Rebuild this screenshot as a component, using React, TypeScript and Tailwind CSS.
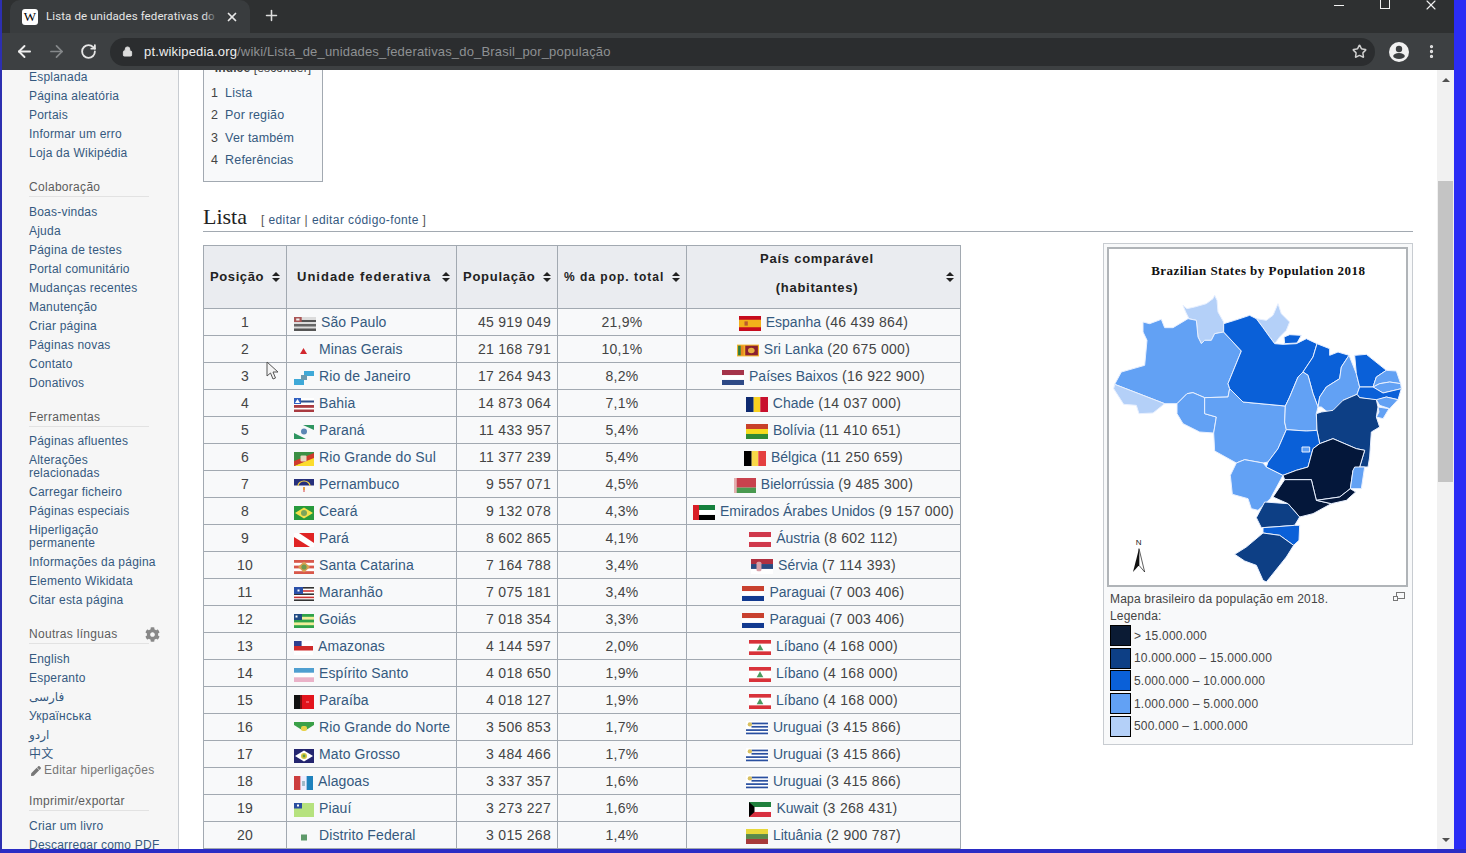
import React from "react";
import { ArrowLeft, ArrowRight, RotateCw, Lock, Star, Plus, X, EllipsisVertical } from "lucide-react";
import { FaCog, FaPen } from "react-icons/fa";

type Row = [number, string, string, string, string, string];

const rows: Row[] = [
  [1, "São Paulo", "45 919 049", "21,9%", "Espanha", "(46 439 864)"],
  [2, "Minas Gerais", "21 168 791", "10,1%", "Sri Lanka", "(20 675 000)"],
  [3, "Rio de Janeiro", "17 264 943", "8,2%", "Países Baixos", "(16 922 900)"],
  [4, "Bahia", "14 873 064", "7,1%", "Chade", "(14 037 000)"],
  [5, "Paraná", "11 433 957", "5,4%", "Bolívia", "(11 410 651)"],
  [6, "Rio Grande do Sul", "11 377 239", "5,4%", "Bélgica", "(11 250 659)"],
  [7, "Pernambuco", "9 557 071", "4,5%", "Bielorrússia", "(9 485 300)"],
  [8, "Ceará", "9 132 078", "4,3%", "Emirados Árabes Unidos", "(9 157 000)"],
  [9, "Pará", "8 602 865", "4,1%", "Áustria", "(8 602 112)"],
  [10, "Santa Catarina", "7 164 788", "3,4%", "Sérvia", "(7 114 393)"],
  [11, "Maranhão", "7 075 181", "3,4%", "Paraguai", "(7 003 406)"],
  [12, "Goiás", "7 018 354", "3,3%", "Paraguai", "(7 003 406)"],
  [13, "Amazonas", "4 144 597", "2,0%", "Líbano", "(4 168 000)"],
  [14, "Espírito Santo", "4 018 650", "1,9%", "Líbano", "(4 168 000)"],
  [15, "Paraíba", "4 018 127", "1,9%", "Líbano", "(4 168 000)"],
  [16, "Rio Grande do Norte", "3 506 853", "1,7%", "Uruguai", "(3 415 866)"],
  [17, "Mato Grosso", "3 484 466", "1,7%", "Uruguai", "(3 415 866)"],
  [18, "Alagoas", "3 337 357", "1,6%", "Uruguai", "(3 415 866)"],
  [19, "Piauí", "3 273 227", "1,6%", "Kuwait", "(3 268 431)"],
  [20, "Distrito Federal", "3 015 268", "1,4%", "Lituânia", "(2 900 787)"],
];

// bandeiras desenhadas numa grelha de 20x14
const flags: Record<string, React.ReactNode> = {
  "São Paulo": (
    <>
      <rect width="20" height="14" fill="#dcdcdc" />
      <rect y="3" width="20" height="2" fill="#555" />
      <rect y="7" width="20" height="2.5" fill="#666" />
      <rect y="11.5" width="20" height="2.5" fill="#555" />
      <rect width="7" height="5" fill="#a55" />
      <rect x="2" y="1.5" width="3" height="2" fill="#eee" />
    </>
  ),
  "Minas Gerais": <polygon points="9.5,4 13,10 6,10" fill="#d2282e" />,
  "Rio de Janeiro": (
    <>
      <rect x="10" width="10" height="5" fill="#3fa9d8" />
      <rect y="8" width="10" height="6" fill="#3fa9d8" />
      <rect x="7" y="4" width="6" height="5" fill="#6b9ab0" />
    </>
  ),
  Bahia: (
    <>
      <rect width="20" height="14" fill="#fff" />
      <rect x="6" y="2.5" width="14" height="2" fill="#2d4f8a" />
      <rect y="7" width="20" height="2.8" fill="#a93a40" />
      <rect y="11.5" width="20" height="2.5" fill="#a93a40" />
      <rect width="7" height="6" fill="#3060c0" />
      <polygon points="3.5,1 6,5 1,5" fill="#fff" />
    </>
  ),
  Paraná: (
    <>
      <polygon points="0,8 0,14 12,14" fill="#2e9560" />
      <polygon points="9,0 20,0 20,5" fill="#2e9560" />
      <circle cx="10" cy="6.5" r="3" fill="#5d87b5" />
    </>
  ),
  "Rio Grande do Sul": (
    <>
      <rect width="20" height="14" fill="#3c8f44" />
      <polygon points="0,14 20,5 20,14" fill="#fbdc2c" />
      <polygon points="0,9 20,1 20,6 0,14" fill="#cf3a2c" />
      <rect x="6.5" y="3.5" width="6" height="6" rx="1" fill="#e8d7c0" />
    </>
  ),
  Pernambuco: (
    <>
      <rect width="20" height="6.5" fill="#26307c" />
      <path d="M4 7a6 5 0 0 1 12 0" fill="none" stroke="#f4d34a" strokeWidth="1.2" />
      <rect x="9" y="8" width="2" height="3" fill="#e8a040" />
      <rect x="9.4" y="11" width="1.2" height="2" fill="#e06060" />
    </>
  ),
  Ceará: (
    <>
      <rect width="20" height="14" fill="#279a3c" />
      <polygon points="10,1.5 19,7 10,12.5 1,7" fill="#f5e04c" />
      <circle cx="10" cy="7" r="3" fill="#7aa55a" />
    </>
  ),
  Pará: (
    <>
      <rect width="20" height="14" fill="#e02424" />
      <polygon points="0,0 5,0 20,10 20,14 16,14 0,4" fill="#fff" />
    </>
  ),
  "Santa Catarina": (
    <>
      <rect width="20" height="14" fill="#fff" />
      <rect width="20" height="2.8" fill="#d8584a" />
      <rect y="5.6" width="20" height="2.8" fill="#d8584a" />
      <rect y="11.2" width="20" height="2.8" fill="#d8584a" />
      <polygon points="10,1.5 16,7 10,12.5 4,7" fill="#d8a050" />
      <circle cx="10" cy="7" r="2.6" fill="#6f9a50" />
    </>
  ),
  Maranhão: (
    <>
      <rect width="20" height="14" fill="#fff" />
      <rect y="0" width="20" height="1.6" fill="#333" />
      <rect y="3.2" width="20" height="1.6" fill="#c33" />
      <rect y="6.4" width="20" height="1.6" fill="#333" />
      <rect y="9.6" width="20" height="1.6" fill="#c33" />
      <rect y="12.4" width="20" height="1.6" fill="#333" />
      <rect width="9" height="7" fill="#2a4fa8" />
      <rect x="3.5" y="2.5" width="2" height="2" fill="#fff" />
    </>
  ),
  Goiás: (
    <>
      <rect width="20" height="14" fill="#2fa34a" />
      <rect y="2.8" width="20" height="2.8" fill="#f1ee9a" />
      <rect y="8.4" width="20" height="2.8" fill="#f1ee9a" />
      <rect width="8" height="6" fill="#1f4a82" />
      <rect x="1.5" y="1.5" width="2" height="2" fill="#fff" />
    </>
  ),
  Amazonas: (
    <>
      <rect width="20" height="14" fill="#fff" />
      <rect y="5" width="20" height="4.5" fill="#cf2a2a" />
      <rect width="8" height="5" fill="#2d3f90" />
    </>
  ),
  "Espírito Santo": (
    <>
      <rect width="20" height="14" fill="#fff" />
      <rect width="20" height="4.7" fill="#4f9fd0" />
      <rect y="9.3" width="20" height="4.7" fill="#eab2c8" />
    </>
  ),
  Paraíba: (
    <>
      <rect width="20" height="14" fill="#e3141c" />
      <rect width="7" height="14" fill="#111" />
      <rect x="6" width="2" height="14" fill="#7a1010" />
      <rect x="12" y="6.5" width="3" height="1" fill="#f9a" />
    </>
  ),
  "Rio Grande do Norte": (
    <>
      <polygon points="0,0 20,0 20,3 12,8 8,8 0,3" fill="#3aa048" />
      <rect x="7" y="4" width="6" height="5" rx="2" fill="#e8d24a" />
    </>
  ),
  "Mato Grosso": (
    <>
      <rect width="20" height="14" fill="#23256f" />
      <polygon points="10,1.5 19,7 10,12.5 1,7" fill="#fff" />
      <circle cx="10" cy="7" r="3" fill="#d8c840" />
      <circle cx="10" cy="7" r="1.4" fill="#5a9a4a" />
    </>
  ),
  Alagoas: (
    <>
      <rect width="20" height="14" fill="#eef" />
      <rect width="6.7" height="14" fill="#cc3d3d" />
      <rect x="13.3" width="6.7" height="14" fill="#1f82bd" />
      <rect x="8.5" y="5" width="3" height="5" fill="#9fb8c8" />
    </>
  ),
  Piauí: (
    <>
      <rect width="20" height="14" fill="#b6e27e" />
      <rect width="8" height="5.5" fill="#2a4fa0" />
      <rect x="3" y="1.5" width="2" height="2" fill="#fff" />
    </>
  ),
  "Distrito Federal": <rect x="7" y="4.5" width="6" height="6" fill="#5e9a6a" />,
  Espanha: (
    <>
      <rect width="20" height="14" fill="#c60b1e" />
      <rect y="3.5" width="20" height="7" fill="#f2b11a" />
      <rect x="5" y="5" width="3" height="4" fill="#ba5b2d" />
    </>
  ),
  "Sri Lanka": (
    <>
      <rect y="1.5" width="20" height="11" fill="#f2b32a" />
      <rect x="1" y="2.5" width="2.5" height="9" fill="#2d7a40" />
      <rect x="3.5" y="2.5" width="2.5" height="9" fill="#e88a20" />
      <rect x="7.5" y="2.5" width="11.5" height="9" fill="#8a1f30" />
      <ellipse cx="13" cy="7" rx="3" ry="2.6" fill="#e8b040" />
    </>
  ),
  "Países Baixos": (
    <>
      <rect width="20" height="14" fill="#fff" />
      <rect width="20" height="4.7" fill="#a5344a" />
      <rect y="9.3" width="20" height="4.7" fill="#2e4a86" />
    </>
  ),
  Chade: (
    <>
      <rect width="7" height="14" fill="#0e2a70" />
      <rect x="7" width="6" height="14" fill="#f8d020" />
      <rect x="13" width="7" height="14" fill="#c8102e" />
    </>
  ),
  Bolívia: (
    <>
      <rect width="20" height="5" fill="#c8402a" />
      <rect y="4.7" width="20" height="4.7" fill="#f6dc1c" />
      <rect y="9.3" width="20" height="4.7" fill="#2f8a34" />
    </>
  ),
  Bélgica: (
    <>
      <rect width="7" height="14" fill="#000" />
      <rect x="7" width="6" height="14" fill="#f8d848" />
      <rect x="13" width="7" height="14" fill="#e44040" />
    </>
  ),
  Bielorrússia: (
    <>
      <rect width="20" height="9" fill="#c8424e" />
      <rect y="9" width="20" height="5" fill="#4a9a50" />
      <rect width="2.5" height="14" fill="#e4b0b0" />
    </>
  ),
  "Emirados Árabes Unidos": (
    <>
      <rect width="20" height="4.7" fill="#15803d" />
      <rect y="4.7" width="20" height="4.6" fill="#fff" />
      <rect y="9.3" width="20" height="4.7" fill="#000" />
      <rect width="5.5" height="14" fill="#d81e26" />
    </>
  ),
  Áustria: (
    <>
      <rect width="20" height="14" fill="#fff" />
      <rect width="20" height="4.7" fill="#d0394c" />
      <rect y="9.3" width="20" height="4.7" fill="#d0394c" />
    </>
  ),
  Sérvia: (
    <>
      <rect width="20" height="4.7" fill="#b03040" />
      <rect y="4.7" width="20" height="4.6" fill="#2a4a80" />
      <rect y="9.3" width="20" height="4.7" fill="#fff" />
      <rect x="5" y="2.5" width="4.5" height="9" rx="1.5" fill="#d8a0a8" />
    </>
  ),
  Paraguai: (
    <>
      <rect width="20" height="14" fill="#fff" />
      <rect width="20" height="4.7" fill="#c8402e" />
      <rect y="9.3" width="20" height="4.7" fill="#123a90" />
    </>
  ),
  Líbano: (
    <>
      <rect width="20" height="14" fill="#fff" />
      <rect width="20" height="3.4" fill="#d8323a" />
      <rect y="10.6" width="20" height="3.4" fill="#d8323a" />
      <polygon points="10,4 13,9.5 7,9.5" fill="#4a9a60" />
    </>
  ),
  Uruguai: (
    <>
      <rect width="20" height="14" fill="#fff" />
      <rect x="5" y="1.5" width="15" height="1.6" fill="#2a50a0" />
      <rect x="5" y="4.6" width="15" height="1.6" fill="#2a50a0" />
      <rect y="7.7" width="20" height="1.6" fill="#2a50a0" />
      <rect y="10.8" width="20" height="1.6" fill="#2a50a0" />
      <circle cx="3.5" cy="3.2" r="2" fill="#d8c060" />
    </>
  ),
  Kuwait: (
    <>
      <rect width="20" height="4.7" fill="#20803d" />
      <rect y="4.7" width="20" height="4.6" fill="#fff" />
      <rect y="9.3" width="20" height="4.7" fill="#d83040" />
      <polygon points="0,0 5,4.7 5,9.3 0,14" fill="#000" />
    </>
  ),
  Lituânia: (
    <>
      <rect width="20" height="4.7" fill="#e8d83a" />
      <rect y="4.7" width="20" height="4.6" fill="#5a8a4a" />
      <rect y="9.3" width="20" height="4.7" fill="#a83a3a" />
    </>
  ),
};

const Flag = ({ name, w, h }: { name: string; w: number; h: number }) => (
  <svg viewBox="0 0 20 14" width={w} height={h} preserveAspectRatio="none" className="shrink-0 mt-[3px]">
    {flags[name]}
  </svg>
);

const SortIcon = () => (
  <svg viewBox="0 0 8 10" className="w-[8px] h-[10px] shrink-0" fill="#222">
    <polygon points="4,0 8,4 0,4" />
    <polygon points="4,10 8,6 0,6" />
  </svg>
);

const Li = ({ children }: { children: React.ReactNode }) => (
  <li className="py-[3px] leading-[13px] text-[12px] tracking-[0.22px] text-[#35597f]">{children}</li>
);

const Heading = ({ title, gear, tight }: { title: string; gear?: boolean; tight?: boolean }) => (
  <div className={`relative h-[15px] flex items-center text-[12px] tracking-[0.3px] text-[#5c5c5c] pb-[2px] ${tight ? "mb-[7px]" : "mb-[8px]"}`}>
    {title}
    {gear && <FaCog size={15} className="absolute left-[116px] top-0 text-[#888]" />}
    <span className="absolute left-0 bottom-[-2px] w-[120px] h-px bg-[#e2e2e2]" />
  </div>
);

const Section = ({ title, items, gear }: { title: string; items: string[]; gear?: boolean }) => (
  <div className="mt-[17px]">
    <Heading title={title} gear={gear} />
    <ul>
      {items.map((i) => (
        <Li key={i}>{i}</Li>
      ))}
    </ul>
  </div>
);

const Sidebar = () => (
  <aside className="w-[177px] shrink-0 bg-[#f6f6f6] border-r border-[#c8ccd1] pl-[27px] overflow-hidden">
    <ul className="-mt-[2px]">
      {["Esplanada", "Página aleatória", "Portais", "Informar um erro", "Loja da Wikipédia"].map((i) => (
        <Li key={i}>{i}</Li>
      ))}
    </ul>
    <Section
      title="Colaboração"
      items={[
        "Boas-vindas",
        "Ajuda",
        "Página de testes",
        "Portal comunitário",
        "Mudanças recentes",
        "Manutenção",
        "Criar página",
        "Páginas novas",
        "Contato",
        "Donativos",
      ]}
    />
    <div className="mt-[17px]">
      <Heading title="Ferramentas" tight />
      <ul>
        <Li>Páginas afluentes</Li>
        <Li>
          Alterações
          <br />
          relacionadas
        </Li>
        <Li>Carregar ficheiro</Li>
        <Li>Páginas especiais</Li>
        <Li>
          Hiperligação
          <br />
          permanente
        </Li>
        <Li>Informações da página</Li>
        <Li>Elemento Wikidata</Li>
        <Li>Citar esta página</Li>
      </ul>
    </div>
    <Section gear title="Noutras línguas" items={["English", "Esperanto", "فارسی", "Українська", "اردو", "中文"]} />
    <div className="h-[13px] leading-[13px] text-[12px] tracking-[0.25px] text-[#777] flex items-center">
      <FaPen size={10} className="ml-[2px] mr-[3px]" />
      Editar hiperligações
    </div>
    <Section title="Imprimir/exportar" items={["Criar um livro", "Descarregar como PDF"]} />
  </aside>
);

const BrazilMap = () => {
  const light = "#b4d0f8";
  const mid = "#62a1f4";
  const strong = "#0a60d8";
  const deep = "#0d3f85";
  const dark = "#04173a";
  const states: [string, string][] = [
    ["250,195 262,205 285,200 320,190 340,175 345,165 352,180 355,215 372,245 372,275 345,280 335,300 315,300 305,310 295,290 290,240 268,235 258,215", light],
    ["470,235 500,240 520,225 535,190 545,220 570,245 560,270 540,290 525,310 510,290 490,262", light],
    ["130,245 150,250 185,237 195,262 220,262 265,235 290,240 295,290 305,310 315,300 335,300 345,280 372,275 425,332 385,430 390,445 385,470 315,472 280,457 262,460 232,490 195,490 45,432 65,395 135,375 142,300 130,275", mid],
    ["42,445 45,432 195,490 160,518 118,520 110,495 72,492", light],
    ["232,490 262,460 280,457 315,472 315,520 350,530 342,578 300,575 250,550 232,520", mid],
    ["315,472 385,470 390,445 430,485 557,497 555,545 560,568 535,625 505,665 490,668 435,658 410,668 345,632 342,578 350,530 315,520", mid],
    ["410,668 435,658 490,668 500,680 550,705 512,775 475,810 455,805 445,775 398,762 392,705", mid],
    ["372,250 405,240 450,225 470,235 490,262 510,290 525,310 550,312 590,310 620,295 652,310 640,350 610,395 595,410 570,470 557,497 430,485 390,445 385,430 425,332 372,275", strong],
    ["553,290 570,283 605,285 592,308 555,310", strong],
    ["652,310 690,325 690,345 715,335 748,345 725,380 720,415 680,440 660,470 655,500 640,460 625,405 610,395 640,350", strong],
    ["610,395 625,405 640,460 655,500 650,520 652,570 620,572 560,568 555,545 557,497 570,470 595,410", mid],
    ["748,345 770,400 780,440 772,462 730,480 710,515 690,520 665,500 655,500 660,470 680,440 720,415 725,380", mid],
    ["765,345 800,342 860,390 830,410 820,440 780,440 770,400", strong],
    ["860,390 890,392 903,430 870,425 840,430 820,440 830,410", mid],
    ["820,440 840,430 870,425 903,430 905,445 850,458", mid],
    ["780,440 820,440 850,458 905,445 895,478 860,470 830,480 780,472 772,462", strong],
    ["830,478 860,470 895,478 870,505 840,495", mid],
    ["835,500 868,505 850,535 830,530 838,515", mid],
    ["650,520 665,515 700,510 730,480 772,462 780,472 830,478 835,500 830,530 840,560 815,575 810,650 805,680 780,680 795,630 770,625 700,595 660,610 652,570", deep],
    ["560,568 620,572 652,570 660,610 640,625 625,680 590,690 550,705 500,680 505,665 535,625", strong],
    ["607,620 630,620 630,635 607,635", mid],
    ["550,705 590,690 625,680 640,625 660,610 700,595 770,625 795,630 780,680 760,690 752,745 720,770 650,780 635,718 555,718", dark],
    ["555,718 635,718 650,780 695,790 640,820 600,830 565,790 520,770", dark],
    ["650,780 720,770 752,745 768,755 740,780 695,790", dark],
    ["765,680 795,680 785,745 752,745 760,690", mid],
    ["495,785 565,790 600,830 585,855 520,860 485,862 470,832", deep],
    ["490,862 520,860 585,855 600,855 598,900 582,915 540,885 490,878", strong],
    ["490,878 540,885 582,915 560,950 500,1025 490,1020 470,975 435,962 405,942 440,920", deep],
  ];
  return (
    <svg viewBox="28 28 891 1004" className="w-full h-full bg-white">
      <text
        x="476"
        y="103"
        textAnchor="middle"
        fontFamily="'Liberation Serif', serif"
        fontWeight="700"
        fontSize="39"
        letterSpacing="1.4"
        fill="#111"
      >
        Brazilian States by Population 2018
      </text>
      {states.map(([points, fill]) => (
        <polygon key={points} points={points} fill={fill} stroke="#e8f0ff" strokeWidth="3" strokeLinejoin="round" />
      ))}
      <text x="108" y="915" fontFamily="'Liberation Sans', sans-serif" fontSize="24" fill="#222">
        N
      </text>
      <polygon points="118,925 100,995 118,975" fill="#111" />
      <polygon points="118,925 135,995 118,975" fill="#fff" stroke="#111" strokeWidth="2" />
    </svg>
  );
};

const legend = [
  ["bg-[#0b1b34]", "> 15.000.000"],
  ["bg-[#0d3f85]", "10.000.000 – 15.000.000"],
  ["bg-[#0a60d8]", "5.000.000 – 10.000.000"],
  ["bg-[#62a1f4]", "1.000.000 – 5.000.000"],
  ["bg-[#b4d0f8]", "500.000 – 1.000.000"],
];

const Figure = () => (
  <figure className="w-[310px] shrink-0 border border-[#c8ccd1] bg-[#f8f9fa] p-[3px] pb-[7px] text-[12px] tracking-[0.2px] text-[#444]">
    <div className="h-[340px] mr-[1px] border-2 border-[#b0b4b8]">
      <BrazilMap />
    </div>
    <div className="pl-[3px]">
      <div className="relative mt-[5px] h-[14px] leading-[14px]">
        Mapa brasileiro da população em 2018.
        <svg viewBox="0 0 12 9" className="absolute right-[4px] top-0 w-[12px] h-[9px]" fill="none" stroke="#777">
          <rect x="3.5" y="0.5" width="8" height="6" />
          <rect x="0.5" y="4.5" width="4" height="4" fill="#f8f9fa" />
        </svg>
      </div>
      <div className="mt-[3px] h-[14px] leading-[14px]">Legenda:</div>
      <div className="mt-[2px] flex flex-col gap-[1.7px]">
        {legend.map(([color, label]) => (
          <div key={label} className="flex items-center gap-[3px]">
            <span className={`w-[21px] h-[21px] border border-black ${color}`} />
            <span>{label}</span>
          </div>
        ))}
      </div>
    </div>
  </figure>
);

const narrow: Record<string, number> = { "São Paulo": 22, Amazonas: 19, Alagoas: 19 };

const Th = ({ children, className }: { children: React.ReactNode; className?: string }) => (
  <th className={`border border-[#a2a9b1] bg-[#eaecf0] px-[6px] font-bold text-[13px] tracking-[0.75px] text-[#222] ${className ?? ""}`}>
    {children}
  </th>
);

const PopTable = () => (
  <table className="mt-[2px] w-[757px] table-fixed border-collapse bg-[#f8f9fa] text-[14px] tracking-[0.3px] text-[#444] shrink-0">
    <colgroup>
      <col className="w-[83px]" />
      <col className="w-[170px]" />
      <col className="w-[101px]" />
      <col className="w-[129px]" />
      <col className="w-[274px]" />
    </colgroup>
    <thead>
      <tr className="h-[63px]">
        <Th>
          <div className="flex items-center justify-between tracking-[0.6px]">
            Posição <SortIcon />
          </div>
        </Th>
        <Th className="pl-[10px]">
          <div className="flex items-center justify-between tracking-[1px]">
            Unidade federativa <SortIcon />
          </div>
        </Th>
        <Th>
          <div className="flex items-center justify-between">
            População <SortIcon />
          </div>
        </Th>
        <Th>
          <div className="flex items-center justify-between text-[12px] tracking-[1px]">
            % da pop. total <SortIcon />
          </div>
        </Th>
        <Th>
          <div className="flex items-center justify-between">
            <span className="flex-1 text-center leading-[29px] -mt-[8px] pr-[5px]">
              País comparável
              <br />
              (habitantes)
            </span>
            <SortIcon />
          </div>
        </Th>
      </tr>
    </thead>
    <tbody>
      {rows.map(([pos, state, pop, pct, country, hab]) => (
        <tr key={pos} className="h-[27px]">
          <td className="border border-[#a2a9b1] text-center">{pos}</td>
          <td className="border border-[#a2a9b1] pl-[7px]">
            <div className="flex items-center gap-[5px] text-[#35597f] tracking-[0.1px] whitespace-nowrap">
              <Flag name={state} w={narrow[state] ?? 20} h={14} />
              <span>{state}</span>
            </div>
          </td>
          <td className="border border-[#a2a9b1] pr-[6px] text-right whitespace-nowrap">{pop}</td>
          <td className="border border-[#a2a9b1] text-center">{pct}</td>
          <td className="border border-[#a2a9b1]">
            <div className="flex items-center justify-center gap-[5px] whitespace-nowrap">
              <Flag name={country} w={22} h={15} />
              <span>
                <span className="text-[#35597f] tracking-normal">{country}</span> {hab}
              </span>
            </div>
          </td>
        </tr>
      ))}
    </tbody>
  </table>
);

const Toc = () => (
  <div className="relative -mt-[13px] w-[120px] h-[125px] border border-[#a2a9b1] bg-[#f8f9fa] px-[7px] text-[12.5px] tracking-[0.15px] text-[#444]">
    <div className="h-[22px] leading-[20px] text-center text-[12px]">
      <b>Índice</b> [esconder]
    </div>
    <ol className="mt-[1.5px]">
      {["Lista", "Por região", "Ver também", "Referências"].map((t, i) => (
        <li key={t} className="h-[22.5px] leading-[22.5px] flex gap-[7px]">
          <span>{i + 1}</span>
          <span className="text-[#35597f]">{t}</span>
        </li>
      ))}
    </ol>
  </div>
);

const Scrollbar = () => (
  <div className="w-[17px] shrink-0 bg-[#f1f1f1] flex flex-col items-center">
    <div className="h-[111px] w-full flex justify-center pt-[8px]">
      <span className="w-0 h-0 border-x-[4px] border-x-transparent border-b-[4px] border-b-[#505050]" />
    </div>
    <div className="h-[301px] w-[15px] bg-[#c4c4c4]" />
    <div className="flex-1 w-full flex justify-center items-end pb-[7px]">
      <span className="w-0 h-0 border-x-[4px] border-x-transparent border-t-[4px] border-t-[#505050]" />
    </div>
  </div>
);

const Browser = () => (
  <header className="shrink-0 text-white">
    <div className="relative h-[33px] bg-[#2e3031] flex items-end">
      <div className="relative ml-[8px] w-[240px] h-[33px] rounded-t-[10px] bg-[#393c3e] flex items-center pl-[12px]">
        <span className="w-[16px] h-[16px] rounded-[3px] bg-white text-black flex items-center justify-center text-[13px] font-['Liberation_Serif',serif] shrink-0">
          W
        </span>
        <span className="relative ml-[8px] w-[172px] overflow-hidden whitespace-nowrap font-['Roboto',sans-serif] text-[11.5px] tracking-[0.1px] text-[#e6e6e6]">
          Lista de unidades federativas do Brasil
          <span className="absolute right-0 top-0 h-full w-[14px] bg-linear-to-r from-transparent to-[#393c3e]" />
        </span>
        <X size={14} strokeWidth={3} className="ml-[7px] shrink-0 text-[#e8e8e8]" />
      </div>
      <Plus size={17} strokeWidth={2.2} className="ml-[13px] mb-[9px] text-[#ddd]" />
      <span className="absolute left-[1332px] top-[5px] w-[10px] h-px bg-[#f2f2f2]" />
      <span className="absolute left-[1378px] -top-[1px] w-[10px] h-[10px] border border-[#f2f2f2]" />
      <X size={16} strokeWidth={1.6} className="absolute left-[1421px] -top-[3px] text-[#f2f2f2]" />
    </div>
    <div className="h-[37px] bg-[#3d4042] flex items-center pl-[13px] pr-[14px]">
      <ArrowLeft size={19} strokeWidth={2.4} className="text-[#eee]" />
      <ArrowRight size={19} strokeWidth={2.2} className="ml-[13px] text-[#85888a]" />
      <RotateCw size={17} strokeWidth={2.6} className="ml-[14px] text-[#e6e6e6]" />
      <div className="ml-[13px] flex-1 h-[28px] rounded-full bg-[#2b2d2f] flex items-center pl-[12px] pr-[8px] text-[13px] tracking-[0.17px]">
        <Lock size={11} fill="#ddd" className="text-[#ddd] shrink-0" />
        <span className="ml-[11px] text-[#eee]">pt.wikipedia.org</span>
        <span className="text-[#8e9193]">/wiki/Lista_de_unidades_federativas_do_Brasil_por_população</span>
        <Star size={15} strokeWidth={2.4} className="ml-auto text-[#cfcfcf]" />
      </div>
      <svg viewBox="0 0 20 20" className="ml-[14px] w-[20px] h-[20px] shrink-0">
        <circle cx="10" cy="10" r="10" fill="#f1f1f1" />
        <circle cx="10" cy="7" r="3.2" fill="#3d4042" />
        <ellipse cx="10" cy="14" rx="5.8" ry="3" fill="#3d4042" />
      </svg>
      <EllipsisVertical size={17} strokeWidth={2.6} className="ml-[14px] text-[#e8e8e8]" />
    </div>
  </header>
);

export default function App() {
  return (
    <div className="relative w-[1466px] h-[853px] overflow-hidden flex flex-col bg-[#2a2cf5] border-l-2 border-l-[#2d2fb0] border-b-4 border-b-[#2a2cc4] pr-[12px] font-['Liberation_Sans','Noto_Sans_CJK_SC','DejaVu_Sans',sans-serif]">
      <Browser />
      <div className="flex-1 min-h-0 flex bg-white overflow-hidden">
        <Sidebar />
        <main className="flex-1 min-w-0 px-[24px] overflow-hidden">
          <Toc />
          <div className="mt-[21px] h-[29px] border-b border-[#a2a9b1] flex items-baseline">
            <h2 className="text-[22px] leading-[28px] font-['Liberation_Serif',serif] text-[#222]">Lista</h2>
            <span className="ml-[14px] text-[12px] tracking-[0.4px] text-[#555]">
              [ <span className="text-[#35597f]">editar</span> | <span className="text-[#35597f]">editar código-fonte</span> ]
            </span>
          </div>
          <div className="mt-[11px] flex items-start justify-between">
            <PopTable />
            <Figure />
          </div>
        </main>
        <Scrollbar />
      </div>
      <svg viewBox="0 0 13 20" className="absolute left-[264px] top-[361px] w-[13px] h-[20px]" fill="#f4f4f4" stroke="#555" strokeWidth="1">
        <polygon points="1,1 1,15 4.5,12 7,18 9.5,17 7,11 12,11" />
      </svg>
    </div>
  );
}
